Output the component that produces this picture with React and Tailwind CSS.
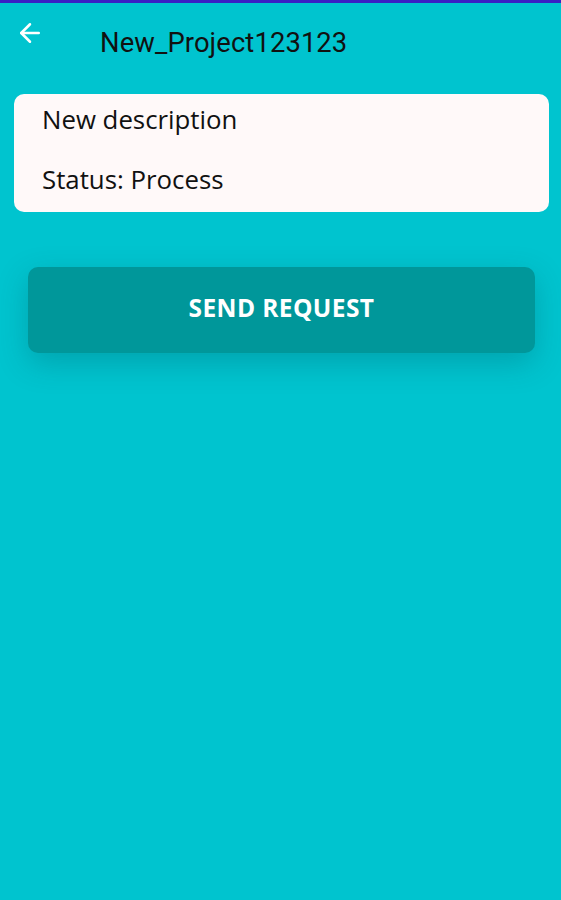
import { ArrowLeft } from "lucide-react";

function App() {
  return (
    <div className="min-h-[900px] w-full bg-[#00c4cf] flex flex-col">
      <div className="h-[3px] bg-[#3a1fc4]" />
      <div className="flex items-center h-[77px] pt-[5px]">
        <div className="w-[100px] pl-[15px] -mt-[23px]">
          <ArrowLeft size={30} color="#ffffff" strokeWidth={2} />
        </div>
        <span className="font-['Roboto',sans-serif] text-[27.4px] text-[#111] tracking-[0.1px]">
          New_Project123123
        </span>
      </div>
      <div className="ml-[14px] mr-[12px] mt-[14px] h-[118px] bg-[#fff9f9] rounded-[10px] flex flex-col pl-[28px] pt-[6px] font-['Open_Sans','Noto_Sans',sans-serif] text-[25.8px] text-[#111]">
        <span className="leading-[38px]">New description</span>
        <span className="leading-[38px] mt-[22px]">Status: Process</span>
      </div>
      <div className="ml-[28px] mr-[26px] mt-[55px] h-[86px] bg-[#00979a] rounded-[10px] flex items-center justify-center shadow-[0_10px_30px_rgba(0,80,90,0.28)]">
        <span className="font-['Open_Sans','Noto_Sans',sans-serif] font-bold text-[24.5px] text-white tracking-[0.4px] -mt-[4px]">
          SEND REQUEST
        </span>
      </div>
    </div>
  );
}

export default App;
